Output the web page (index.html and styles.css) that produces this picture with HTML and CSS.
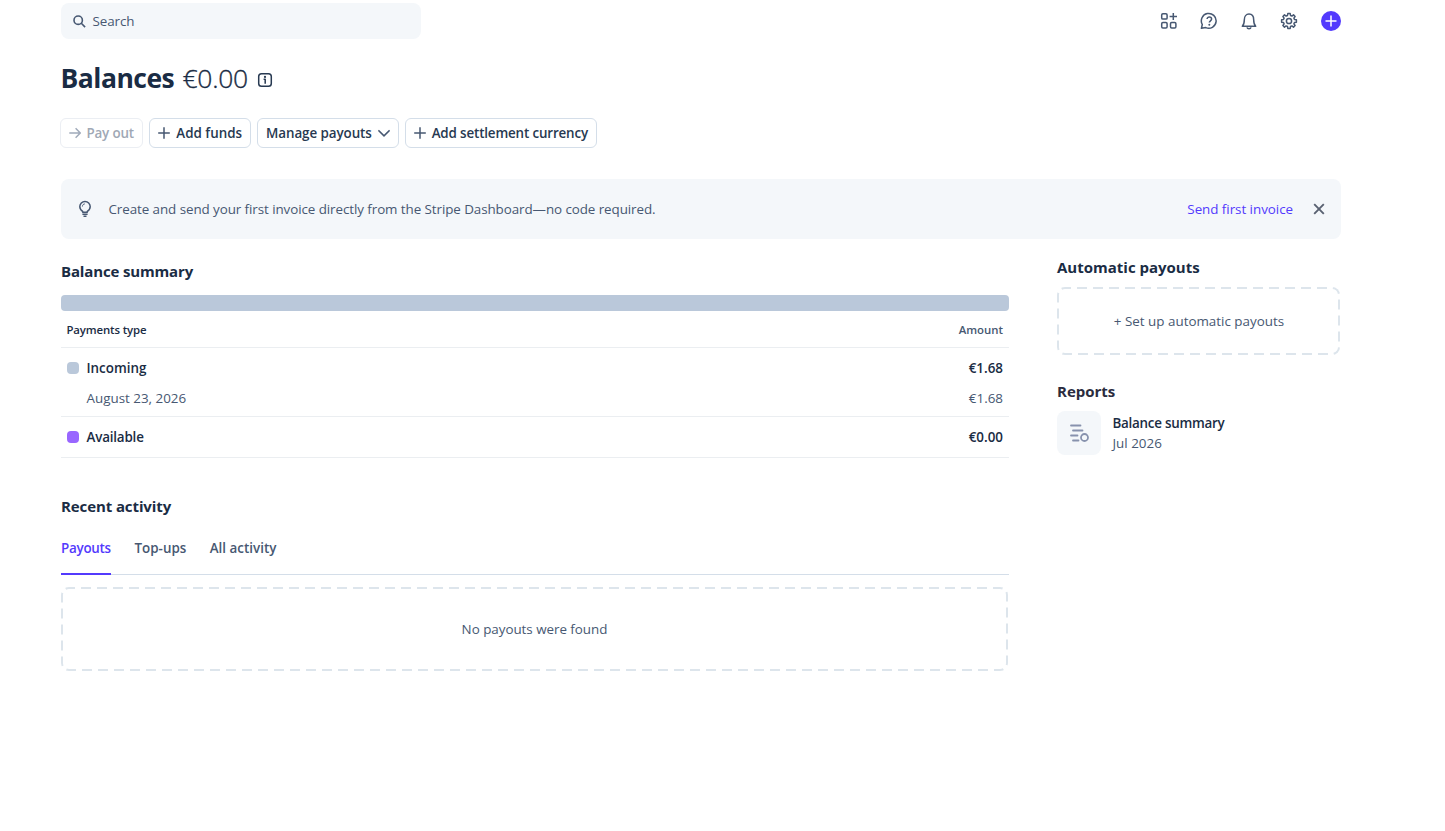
FILE: index.html
```html
<!DOCTYPE html>
<html lang="en">
<head>
<meta charset="utf-8">
<title>Balances</title>
<link rel="stylesheet" href="styles.css">
</head>
<body>
<div class="page">
  <header class="topbar">
    <div class="search">
      <svg class="icon" width="13" height="13" viewBox="0 0 13 13"><circle cx="5.2" cy="5.2" r="4.2"/><path d="M8.300 8.300l3.800 3.800"/></svg>
      <span class="search-label">Search</span>
    </div>
    <nav class="tools">
      <svg class="icon" width="18" height="18" viewBox="0 0 18 18"><rect x="1.700" y="1.700" width="5.400" height="5.400" rx="1.200"/><rect x="1.700" y="10.500" width="5.400" height="5.400" rx="1.200"/><rect x="10.500" y="10.500" width="5.400" height="5.400" rx="1.200"/><path d="M13.300 1v7M9.600 4.500H17"/></svg>
      <svg class="icon" width="18" height="18" viewBox="0 0 18 18"><path d="M1.400 16.300l.9-3.800A7.400 7.400 0 1 1 5.700 15.600z"/><path d="M7.100 7.100c0-2.900 4.500-2.800 4.500 0 0 1.700-2.300 1.800-2.300 3.500"/><circle class="dot" cx="9.300" cy="12.700" r="1"/></svg>
      <svg class="icon" width="18" height="18" viewBox="0 0 18 18"><path d="M2.300 14.200c1.500-1.400 2-3 2-6.300C4.300 4.300 6.200 2.100 9 2.100s4.700 2.200 4.700 5.800c0 3.300.5 4.900 2 6.300z"/><path d="M7 15.300c.4 1.800 3.600 1.800 4 0"/></svg>
      <svg class="icon" width="18" height="18" viewBox="-9 -9 18 18"><path d="M7.400-1.200v2.400L5.500 1.500 4.900 2.900 6.100 4.500 4.500 6.100 2.900 4.900 1.500 5.500 1.200 7.400h-2.400L-1.500 5.500-2.900 4.900-4.500 6.100-6.100 4.500-4.900 2.900-5.500 1.500-7.400 1.200v-2.400L-5.500-1.500-4.900-2.900-6.100-4.500-4.500-6.100-2.900-4.900-1.500-5.500-1.200-7.400h2.400L1.500-5.500 2.900-4.900 4.500-6.100 6.100-4.500 4.900-2.900 5.500-1.500z"/><circle r="2.600"/></svg>
      <svg class="create" width="20" height="20" viewBox="0 0 20 20"><circle cx="10" cy="10" r="10"/><path d="M10 4.500v11M4.500 10h11"/></svg>
    </nav>
  </header>

  <h1 class="title"><span class="title-name">Balances</span><span class="title-amount">€0.00</span>
    <svg class="icon info" width="16" height="14" viewBox="0 0 16 14"><rect x="1.700" y=".8" width="12.600" height="12.400" rx="2.800"/><path d="M6.600 6.300h1.600v4.400"/><circle class="dot" cx="8" cy="3.900" r="1.100"/></svg>
  </h1>

  <div class="actions">
    <button class="btn disabled"><svg class="icon" width="12" height="12" viewBox="0 0 12 12"><path d="M.3 6h11M6.600 1.300L11.300 6l-4.700 4.700"/></svg><span class="b1">Pay out</span></button>
    <button class="btn"><svg class="icon" width="12" height="12" viewBox="0 0 12 12"><path d="M6 .2v11.600M.2 6h11.600"/></svg><span>Add funds</span></button>
    <button class="btn"><span class="b3">Manage payouts</span><svg class="icon" width="12" height="12" viewBox="0 0 12 12"><path d="M.4 3.300L6 8.900l5.600-5.600"/></svg></button>
    <button class="btn"><svg class="icon" width="12" height="12" viewBox="0 0 12 12"><path d="M6 .2v11.600M.2 6h11.600"/></svg><span class="b4">Add settlement currency</span></button>
  </div>

  <section class="banner">
    <svg class="icon" width="16" height="18" viewBox="0 0 16 18"><path d="M5.700 12.300v-.9C4 10.400 2.800 8.700 2.800 6.600a5.200 5.200 0 0 1 10.400 0c0 2.100-1.200 3.800-2.900 4.800v.9z"/><path class="thin" d="M5.400 6.500c0-1.500 1-2.500 2.400-2.600"/><path d="M5.400 14.200h5.200M6.500 16.200h3"/></svg>
    <span class="banner-text">Create and send your first invoice directly from the Stripe Dashboard—no code required.</span>
    <a class="banner-link">Send first invoice</a>
    <svg class="icon close" width="12" height="12" viewBox="0 0 12 12"><path d="M1.200 1.200l9.600 9.600M10.800 1.200l-9.600 9.600"/></svg>
  </section>

  <div class="columns">
    <main class="main">
      <h2 class="heading h-summary">Balance summary</h2>
      <div class="bar"></div>
      <div class="row head"><span class="type">Payments type</span><span class="amount-head">Amount</span></div>
      <div class="group">
        <div class="row strong"><i class="swatch"></i><span class="label">Incoming</span><span>€1.68</span></div>
        <div class="row detail"><span class="date">August 23, 2026</span><span>€1.68</span></div>
      </div>
      <div class="row strong available"><i class="swatch purple"></i><span class="label tight">Available</span><span>€0.00</span></div>

      <h2 class="heading h-activity">Recent activity</h2>
      <div class="tabs"><span class="tab active">Payouts</span><span class="tab">Top-ups</span><span class="tab">All activity</span></div>
      <div class="dashed empty"><svg class="outline"><rect width="100%" height="100%" rx="8"/></svg><span class="empty-text">No payouts were found</span></div>
    </main>
    <aside class="side">
      <h2 class="heading h-auto">Automatic payouts</h2>
      <div class="dashed setup"><svg class="outline"><rect width="100%" height="100%" rx="8"/></svg><span class="setup-text">+ Set up automatic payouts</span></div>
      <h2 class="heading h-reports">Reports</h2>
      <div class="report">
        <div class="tile"><svg class="icon" width="20" height="20" viewBox="0 0 20 20"><path d="M2 2.500h9.500M4 7.500h9.500M2 12.500h6.500M4 17.500h5.500"/><circle cx="15.500" cy="14.500" r="3.500"/></svg></div>
        <div class="report-text"><span class="report-name">Balance summary</span><span class="report-date">Jul 2026</span></div>
      </div>
    </aside>
  </div>
</div>
</body>
</html>
```
FILE: styles.css
```css
* { box-sizing: border-box; }
body { margin: 0; background: #fff; color: #1a2c44; font: 13.4px/20px "Open Sans", "Noto Sans", sans-serif; }
.page { width: 1280px; margin-left: 61px; padding-top: 3px; }
.icon { fill: none; stroke: #475872; stroke-width: 1.5; stroke-linejoin: round; flex: none; }
.icon .dot { fill: #475872; stroke: none; }
.icon .thin { stroke-width: 1; }
h1, h2 { margin: 0; }

.topbar { display: flex; justify-content: space-between; align-items: center; height: 36px; }
.search { display: flex; align-items: center; gap: 6.5px; width: 360px; height: 36px; padding-left: 12px; border-radius: 8px; background: #f4f7fa; color: #475872; }
.search-label { letter-spacing: -.1px; }
.search .icon { stroke-width: 1.6; }
.tools { display: flex; align-items: center; gap: 22px; }
.create { margin-left: 1px; fill: #533afd; }
.create path { stroke: #fff; stroke-width: 1.5; }

.title { display: flex; align-items: center; height: 36px; margin-top: 21px; font-size: 26.5px; line-height: 36px; }
.title-name { width: 113px; margin-left: -.5px; font-weight: 700; letter-spacing: -.5px; }
.title-amount { width: 66px; margin-left: 9px; font-weight: 300; letter-spacing: -.3px; -webkit-text-stroke: .35px #1a2c44; }
.info { margin: 3px 0 0 8.5px; stroke: #273951; }
.info .dot { fill: #273951; }

.actions { display: flex; gap: 6px; margin: 22px 0 0 -1px; }
.btn { display: flex; align-items: center; justify-content: space-between; height: 30px; padding: 0 8px; border: 1px solid #d4dee9; border-radius: 6px; background: #fff; color: #273951; font: inherit; font-weight: 600; white-space: nowrap; }
.btn:nth-child(1) { width: 83px; }
.btn:nth-child(2) { width: 102px; }
.btn:nth-child(3) { width: 142px; }
.btn:nth-child(4) { width: 192px; }
.b1 { letter-spacing: -.15px; }
.b3 { letter-spacing: -.07px; }
.b4 { letter-spacing: -.15px; }
.disabled { border-color: #ebeef3; color: #a0a8b5; }
.disabled .icon { stroke: #a0aaba; }

.banner { display: flex; align-items: center; height: 60px; margin-top: 31px; padding: 0 16px; border-radius: 8px; background: #f4f7fa; color: #475872; }
.banner-text { margin-left: 15.5px; letter-spacing: -.075px; white-space: nowrap; }
.banner-link { margin-left: auto; color: #533afd; letter-spacing: -.04px; }
.close { margin-left: 20px; stroke: #596171; stroke-width: 1.9; }

.columns { display: grid; grid-template-columns: 948px 284px; gap: 48px; }
.heading { font-size: 15px; line-height: 24px; font-weight: 700; white-space: nowrap; }
.h-summary { margin-top: 20px; letter-spacing: -.15px; }
.bar { height: 16px; margin-top: 12px; border-radius: 4px; background: #bac8da; }
.row { display: flex; align-items: center; justify-content: space-between; padding: 0 6px; }
.head { height: 37px; padding-top: 1px; border-bottom: 1px solid #ebeef1; font-size: 11.4px; font-weight: 600; }
.type { margin-left: -.5px; letter-spacing: -.13px; }
.amount-head { color: #475872; }
.group { height: 69px; padding-top: 5px; border-bottom: 1px solid #ebeef1; }
.group .row { height: 30px; }
.strong { font-weight: 600; }
.swatch { width: 12px; height: 12px; margin-right: 7.5px; border-radius: 4px; background: #bac8da; }
.purple { background: #9966ff; }
.label { margin-right: auto; }
.tight { letter-spacing: -.18px; }
.row.detail { padding-left: 25.5px; color: #475872; }
.available { height: 41px; border-bottom: 1px solid #ebeef1; }
.h-activity { margin-top: 36px; letter-spacing: -.1px; }
.tabs { display: flex; gap: 23.5px; height: 57px; border-bottom: 1px solid #d4dee9; color: #475872; font-weight: 600; }
.tab { height: 57px; padding-top: 20px; }
.active { width: 50px; border-bottom: 2px solid #533afd; color: #533afd; letter-spacing: -.26px; }
.dashed { position: relative; display: grid; place-items: center; overflow: hidden; border-radius: 8px; color: #475872; }
.outline { position: absolute; inset: 0; width: 100%; height: 100%; fill: none; stroke: #dde5ec; stroke-width: 4; stroke-dasharray: 10 6; stroke-dashoffset: 4; }
.empty { width: 947px; height: 84px; margin-top: 12px; }
.empty-text { letter-spacing: -.03px; }
.h-auto { margin-top: 16px; }
.setup { width: 283px; height: 68px; margin-top: 8px; }
.setup-text { padding-left: 1px; }
.h-reports { margin-top: 24px; color: #2a2c3e; }
.report { display: flex; gap: 11.5px; margin-top: 8px; }
.tile { display: grid; place-items: center; width: 44px; height: 44px; border-radius: 8px; background: #f4f7fa; }
.tile .icon { stroke: #8792ad; stroke-width: 1.8; stroke-linecap: round; }
.report-text { display: flex; flex-direction: column; padding-top: 2px; }
.report-name { font-weight: 600; letter-spacing: -.25px; }
.report-date { color: #475872; }
```
